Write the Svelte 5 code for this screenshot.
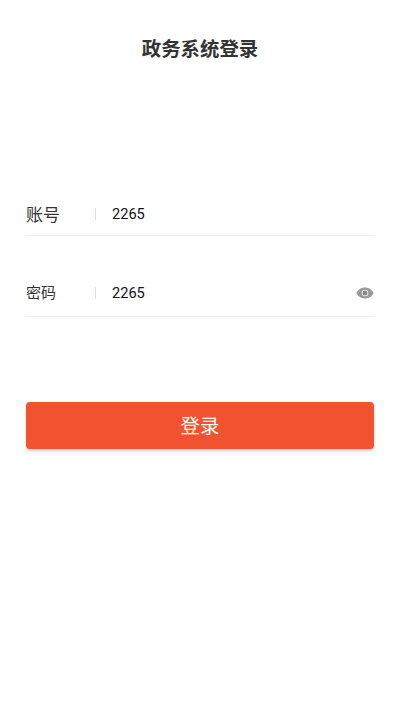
<script lang="ts">
  let account = $state('2265')
  let password = $state('2265')
</script>

<div class="page">
  <h1 class="title">政务系统登录</h1>

  <form class="form" onsubmit={(e) => e.preventDefault()}>
    <div class="row row-account">
      <label class="label label-lg" for="account">账号</label>
      <span class="divider"></span>
      <input id="account" class="field" bind:value={account} />
    </div>

    <div class="row row-password">
      <label class="label label-up" for="password">密码</label>
      <span class="divider"></span>
      <input id="password" class="field" type="text" bind:value={password} />
      <svg class="eye" viewBox="0 0 18 12" width="18" height="12" aria-hidden="true">
        <path fill-rule="evenodd" fill="#999" d="M9 .5C5.2.5 2 2.7.4 6 2 9.3 5.2 11.5 9 11.5S16 9.3 17.6 6C16 2.7 12.800.5 9 .5zM9 9.300a3.300 3.300 0 1 1 0-6.600 3.300 3.300 0 0 1 0 6.600z" />
        <circle cx="9" cy="6" r="2.500" fill="#888" />
      </svg>
    </div>

    <button class="submit" type="submit">登录</button>
  </form>
</div>

<style>
  :global(body) {
    background: #fff;
    font-family: Roboto, "Noto Sans CJK SC", sans-serif;
  }

  .page {
    height: 711px;
    padding: 0 26px;
    box-sizing: border-box;
  }

  .title {
    margin: 0;
    padding-top: 37px;
    line-height: 26px;
    font-size: 19.4px;
    font-weight: 700;
    color: #333;
    text-align: center;
  }

  .form {
    display: flex;
    flex-direction: column;
    margin-top: 129px;
  }

  .row {
    display: flex;
    align-items: center;
    border-bottom: 1px solid #eee;
  }
  .row-account { height: 43px; }
  .row-password { height: 47px; margin-top: 33px; }

  .label {
    width: 69px;
    flex-shrink: 0;
    font-size: 15px;
    color: #333;
  }
  .label-lg { font-size: 17px; }
  .label-up { padding-bottom: 2px; }

  .divider {
    width: 1px;
    height: 12px;
    background: #ddd;
    flex-shrink: 0;
  }

  .field {
    flex: 1;
    min-width: 0;
    margin-left: 16px;
    padding: 0;
    border: 0;
    outline: 0;
    background: none;
    font: inherit;
    font-size: 14.6px;
    color: #111;
  }

  .eye { flex-shrink: 0; }

  .submit {
    height: 47px;
    margin-top: 85px;
    padding: 0 0 2px;
    border: 0;
    border-radius: 4px;
    background: #f15230;
    box-shadow: 0 2px 3px rgba(0, 0, 0, 0.2);
    color: #fff;
    font: inherit;
    font-size: 19.4px;
  }
</style>
